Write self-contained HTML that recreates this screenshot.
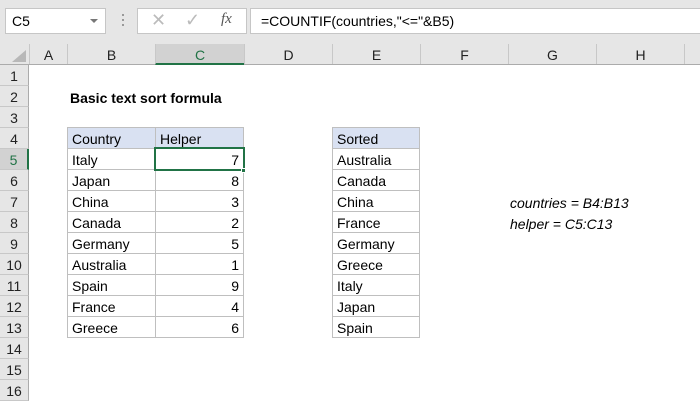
<!DOCTYPE html>
<html><head><style>
*{margin:0;padding:0;box-sizing:border-box}
body{width:700px;height:400px;overflow:hidden;background:#fff;font-family:"Liberation Sans",sans-serif;position:relative;color:#000}
.a{position:absolute}
.top{left:0;top:0;width:700px;height:44px;background:#e6e6e6}
.hdr{left:0;top:44px;width:700px;height:21px;background:#e6e6e6;border-bottom:1px solid #ababab}
.ch{position:absolute;top:44px;height:20px;font-size:14px;line-height:22px;text-align:center;color:#222;border-left:1px solid #c8c8c8}
.rh{position:absolute;left:0;width:29px;height:21px;background:#e6e6e6;border-bottom:1px solid #c8c8c8;border-right:1px solid #ababab;font-size:14px;line-height:22px;text-align:center;color:#222}
.c{position:absolute;height:22px;border:1px solid #bfbfbf;font-size:14px;line-height:22px;padding:0 4px;white-space:nowrap}
.hd{background:#d9e1f2}
.r{text-align:right}
</style></head><body>
<div class="a top"></div>
<div class="a" style="left:5px;top:8px;width:101px;height:26px;background:#fff;border:1px solid #c6c6c6;font-size:14px;line-height:24px;padding-left:6px">C5</div>
<div class="a" style="left:90px;top:19px;width:0;height:0;border-left:4px solid transparent;border-right:4px solid transparent;border-top:4px solid #777"></div>
<div class="a" style="left:122px;top:14px;width:2px;height:2px;background:#999;box-shadow:0 5px #999,0 10px #999"></div>
<div class="a" style="left:137px;top:8px;width:110px;height:26px;background:#fff;border:1px solid #c6c6c6"></div>
<div class="a" style="left:151px;top:10px;font-size:18px;color:#bbb">✕</div>
<div class="a" style="left:185px;top:10px;font-size:18px;color:#bbb">✓</div>
<div class="a" style="left:221px;top:11px;font-size:15px;font-style:italic;font-family:'Liberation Serif',serif;color:#555">fx</div>
<div class="a" style="left:250px;top:8px;width:460px;height:26px;background:#fff;border:1px solid #c6c6c6;font-size:14px;line-height:25px;padding-left:10px">=COUNTIF(countries,"&lt;="&amp;B5)</div>
<div class="a hdr"></div>
<div class="a" style="left:12px;top:50px;width:0;height:0;border-left:14px solid transparent;border-bottom:12px solid #b8b8b8"></div>
<div class="ch" style="left:29px;width:38px">A</div>
<div class="ch" style="left:67px;width:88px">B</div>
<div class="ch" style="left:155px;width:89px;background:#d2d2d2;color:#217346;border-bottom:2px solid #217346;height:21px">C</div>
<div class="ch" style="left:244px;width:88px">D</div>
<div class="ch" style="left:332px;width:88px">E</div>
<div class="ch" style="left:420px;width:88px">F</div>
<div class="ch" style="left:508px;width:88px">G</div>
<div class="ch" style="left:596px;width:88px">H</div>
<div class="ch" style="left:684px;width:20px"></div>
<div class="rh" style="top:65px">1</div>
<div class="rh" style="top:86px">2</div>
<div class="rh" style="top:107px">3</div>
<div class="rh" style="top:128px">4</div>
<div class="rh" style="top:149px;background:#d2d2d2;color:#217346;border-right:2px solid #217346">5</div>
<div class="rh" style="top:170px">6</div>
<div class="rh" style="top:191px">7</div>
<div class="rh" style="top:212px">8</div>
<div class="rh" style="top:233px">9</div>
<div class="rh" style="top:254px">10</div>
<div class="rh" style="top:275px">11</div>
<div class="rh" style="top:296px">12</div>
<div class="rh" style="top:317px">13</div>
<div class="rh" style="top:338px">14</div>
<div class="rh" style="top:359px">15</div>
<div class="rh" style="top:380px">16</div>
<div class="a" style="left:70px;top:90px;font-size:14px;font-weight:bold">Basic text sort formula</div>

<div class="c hd" style="left:67px;top:127px;width:89px">Country</div>
<div class="c hd" style="left:155px;top:127px;width:89px">Helper</div>
<div class="c" style="left:67px;top:148px;width:89px">Italy</div><div class="c r" style="left:155px;top:148px;width:89px">7</div>
<div class="c" style="left:67px;top:169px;width:89px">Japan</div><div class="c r" style="left:155px;top:169px;width:89px">8</div>
<div class="c" style="left:67px;top:190px;width:89px">China</div><div class="c r" style="left:155px;top:190px;width:89px">3</div>
<div class="c" style="left:67px;top:211px;width:89px">Canada</div><div class="c r" style="left:155px;top:211px;width:89px">2</div>
<div class="c" style="left:67px;top:232px;width:89px">Germany</div><div class="c r" style="left:155px;top:232px;width:89px">5</div>
<div class="c" style="left:67px;top:253px;width:89px">Australia</div><div class="c r" style="left:155px;top:253px;width:89px">1</div>
<div class="c" style="left:67px;top:274px;width:89px">Spain</div><div class="c r" style="left:155px;top:274px;width:89px">9</div>
<div class="c" style="left:67px;top:295px;width:89px">France</div><div class="c r" style="left:155px;top:295px;width:89px">4</div>
<div class="c" style="left:67px;top:316px;width:89px">Greece</div><div class="c r" style="left:155px;top:316px;width:89px">6</div>
<div class="a" style="left:154px;top:147px;width:91px;height:24px;border:2px solid #217346"></div>
<div class="a" style="left:241px;top:168px;width:5px;height:5px;background:#217346;border:1px solid #fff"></div>

<div class="c hd" style="left:332px;top:127px;width:88px">Sorted</div>
<div class="c" style="left:332px;top:148px;width:88px">Australia</div>
<div class="c" style="left:332px;top:169px;width:88px">Canada</div>
<div class="c" style="left:332px;top:190px;width:88px">China</div>
<div class="c" style="left:332px;top:211px;width:88px">France</div>
<div class="c" style="left:332px;top:232px;width:88px">Germany</div>
<div class="c" style="left:332px;top:253px;width:88px">Greece</div>
<div class="c" style="left:332px;top:274px;width:88px">Italy</div>
<div class="c" style="left:332px;top:295px;width:88px">Japan</div>
<div class="c" style="left:332px;top:316px;width:88px">Spain</div>

<div class="a" style="left:510px;top:195px;font-size:14px;font-style:italic">countries = B4:B13</div>
<div class="a" style="left:510px;top:216px;font-size:14px;font-style:italic">helper = C5:C13</div>
</body></html>
